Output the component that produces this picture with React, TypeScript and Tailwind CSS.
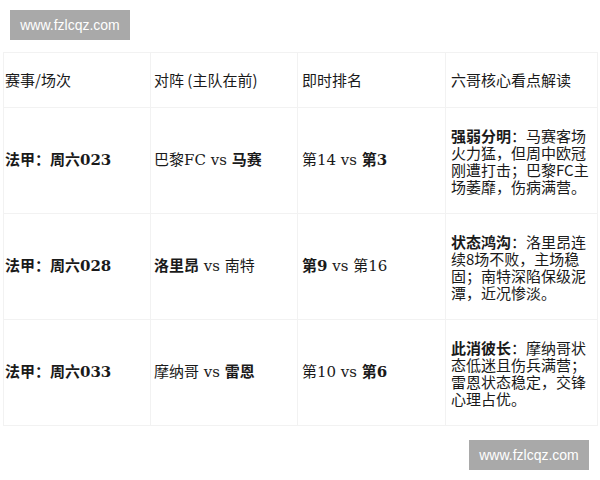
const rows = [
  {
    match: "法甲：周六023",
    home: "巴黎FC",
    away: "马赛",
    boldHome: false,
    homeRank: "第14",
    awayRank: "第3",
    boldHomeRank: false,
    tag: "强弱分明",
    note: "马赛客场火力猛，但周中欧冠刚遭打击；巴黎FC主场萎靡，伤病满营。",
  },
  {
    match: "法甲：周六028",
    home: "洛里昂",
    away: "南特",
    boldHome: true,
    homeRank: "第9",
    awayRank: "第16",
    boldHomeRank: true,
    tag: "状态鸿沟",
    note: "洛里昂连续8场不败，主场稳固；南特深陷保级泥潭，近况惨淡。",
  },
  {
    match: "法甲：周六033",
    home: "摩纳哥",
    away: "雷恩",
    boldHome: false,
    homeRank: "第10",
    awayRank: "第6",
    boldHomeRank: false,
    tag: "此消彼长",
    note: "摩纳哥状态低迷且伤兵满营；雷恩状态稳定，交锋心理占优。",
  },
];

const sans = "font-['Noto_Sans_CJK_SC','DejaVu_Sans',sans-serif]";
const serif = "font-['DejaVu_Serif','Noto_Sans_CJK_SC',serif]";

export default function App() {
  return (
    <div className="relative h-[480px] w-[600px] overflow-hidden bg-white text-[#1a1a1a]">
      <div className="absolute left-[10px] top-[10px] flex h-[30px] w-[120px] items-center justify-center bg-[#a9a9a9] font-['Liberation_Sans',sans-serif] text-[14px] text-white">
        www.fzlcqz.com
      </div>

      <div className="pl-[3px] pt-[52px]">
        <table className="w-[594px] table-fixed border-collapse">
          <colgroup>
            <col className="w-[147px]" />
            <col className="w-[147px]" />
            <col className="w-[148px]" />
            <col className="w-[152px]" />
          </colgroup>
          <thead>
            <tr className={`h-[55px] text-left text-[15px] font-normal ${sans}`}>
              <th className="border border-[#f2f2f2] px-[1px] font-normal">赛事/场次</th>
              <th className="border border-[#f2f2f2] px-[3px] font-normal">对阵 (主队在前)</th>
              <th className="border border-[#f2f2f2] px-[4px] font-normal">即时排名</th>
              <th className="border border-[#f2f2f2] px-[5px] font-normal">六哥核心看点解读</th>
            </tr>
          </thead>
          <tbody>
            {rows.map((r) => (
              <tr key={r.match} className="h-[106px] text-[15px]">
                <td className={`border border-[#f2f2f2] px-[1px] font-bold ${serif}`}>{r.match}</td>
                <td className={`border border-[#f2f2f2] px-[3px] ${serif}`}>
                  <span className={r.boldHome ? "font-bold" : ""}>{r.home}</span> vs{" "}
                  <span className={r.boldHome ? "" : "font-bold"}>{r.away}</span>
                </td>
                <td className={`border border-[#f2f2f2] px-[4px] ${serif}`}>
                  <span className={r.boldHomeRank ? "font-bold" : ""}>{r.homeRank}</span> vs{" "}
                  <span className={r.boldHomeRank ? "" : "font-bold"}>{r.awayRank}</span>
                </td>
                <td className={`border border-[#f2f2f2] px-[5px] leading-[17px] ${sans}`}>
                  <span className="font-bold">{r.tag}</span>：{r.note}
                </td>
              </tr>
            ))}
          </tbody>
        </table>
      </div>

      <div className="absolute left-[469px] top-[440px] flex h-[30px] w-[120px] items-center justify-center bg-[#a9a9a9] font-['Liberation_Sans',sans-serif] text-[14px] text-white">
        www.fzlcqz.com
      </div>
    </div>
  );
}
